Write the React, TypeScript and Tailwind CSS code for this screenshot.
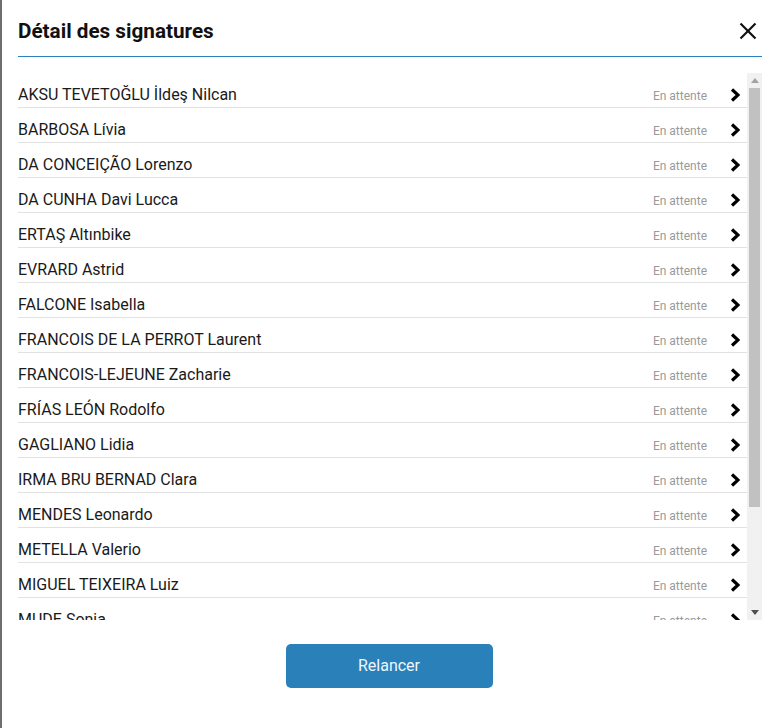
import React from "react";

const names = [
  "AKSU TEVETOĞLU İldeş Nilcan",
  "BARBOSA Lívia",
  "DA CONCEIÇÃO Lorenzo",
  "DA CUNHA Davi Lucca",
  "ERTAŞ Altınbike",
  "EVRARD Astrid",
  "FALCONE Isabella",
  "FRANCOIS DE LA PERROT Laurent",
  "FRANCOIS-LEJEUNE Zacharie",
  "FRÍAS LEÓN Rodolfo",
  "GAGLIANO Lidia",
  "IRMA BRU BERNAD Clara",
  "MENDES Leonardo",
  "METELLA Valerio",
  "MIGUEL TEIXEIRA Luiz",
  "MUDE Sonja",
  "NASCIMENTO Pedro",
];

function Chevron() {
  return (
    <svg width="10" height="14" viewBox="0 0 10 14" className="block shrink-0">
      <polyline
        points="2,1.5 8,7 2,12.5"
        fill="none"
        stroke="#000"
        strokeWidth="3.2"
        strokeLinecap="butt"
        strokeLinejoin="miter"
      />
    </svg>
  );
}

export default function App() {
  return (
    <div
      className="flex h-[728px] w-[769px] bg-white"
      style={{ fontFamily: "Roboto, 'Liberation Sans', sans-serif" }}
    >
      <div className="w-[2px] shrink-0 bg-[#6e6e6e]" />
      <div className="flex flex-1 flex-col pl-[16px] pr-[7px]">
        <div className="flex h-[57px] shrink-0 items-start justify-between border-b border-[#2a82bf] pt-[17px]">
          <h1 className="text-[20.7px] font-bold leading-[28px] text-[#111]">
            Détail des signatures
          </h1>
          <button className="mr-[5px] mt-[5px] flex h-[18px] w-[18px] items-center justify-center">
            <svg width="18" height="18" viewBox="0 0 18 18">
              <line x1="1.5" y1="1.5" x2="16.5" y2="16.5" stroke="#111" strokeWidth="2.2" />
              <line x1="16.5" y1="1.5" x2="1.5" y2="16.5" stroke="#111" strokeWidth="2.2" />
            </svg>
          </button>
        </div>
        <div className="mt-[16px] flex h-[547px] shrink-0">
          <div className="flex-1 overflow-hidden">
            {names.map((n) => (
              <div
                key={n}
                className="flex h-[35px] items-start border-b border-[#e2e2e2]"
              >
                <span className="flex-1 pt-[10px] text-[16px] leading-[24px] text-[#1a1a1a]">{n}</span>
                <span className="pt-[11px] text-[12px] leading-[24px] text-[#9a9a9a]">En attente</span>
                <span className="ml-[23px] mr-[7px] pt-[15px]">
                  <Chevron />
                </span>
              </div>
            ))}
          </div>
          <div className="flex w-[15px] shrink-0 flex-col bg-[#f1f1f1]">
            <div className="flex h-[15px] items-center justify-center">
              <svg width="8" height="5" viewBox="0 0 8 5">
                <polygon points="4,0 8,5 0,5" fill="#a3a3a3" />
              </svg>
            </div>
            <div className="mx-[2px] h-[419px] bg-[#c1c1c1]" />
            <div className="flex-1" />
            <div className="flex h-[15px] items-center justify-center">
              <svg width="8" height="5" viewBox="0 0 8 5">
                <polygon points="0,0 8,0 4,5" fill="#505050" />
              </svg>
            </div>
          </div>
        </div>
        <div className="flex justify-center pt-[24px]">
          <button className="-ml-[2px] h-[44px] w-[207px] rounded-[5px] bg-[#2a80b9] text-[16px] text-[#eef7fc]">
            Relancer
          </button>
        </div>
      </div>
    </div>
  );
}
